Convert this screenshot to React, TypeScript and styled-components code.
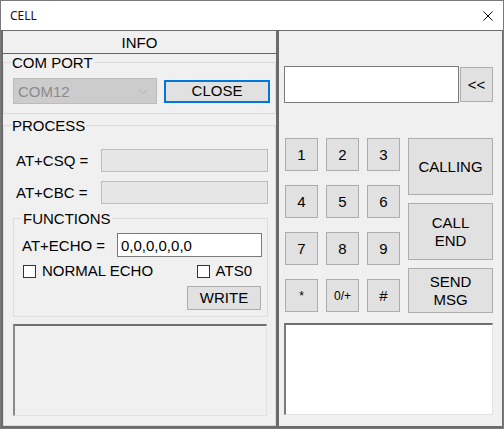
import React from 'react';
import styled, { createGlobalStyle } from 'styled-components';

const GlobalStyle = createGlobalStyle`
  html, body {
    margin: 0;
    padding: 0;
    background: #ffffff;
  }
  body {
    font-family: "Liberation Sans", Arial, sans-serif;
    font-size: 15px;
    color: #000;
  }
  * {
    box-sizing: border-box;
  }
`;

const digits = ['1', '2', '3', '4', '5', '6', '7', '8', '9', '*', '0/+', '#'];

export default function App() {
  return (
    <>
      <GlobalStyle />
      <Window>
        <TitleBar>
          <Title>CELL</Title>
          <svg width="10" height="10" viewBox="0 0 10 10">
            <path d="M0.5 0.5 L9.5 9.5 M9.5 0.5 L0.5 9.5" stroke="#111" strokeWidth="1" />
          </svg>
        </TitleBar>
        <Body>
          <LeftPanel>
            <InfoTab>INFO</InfoTab>
            <Group $pad="7px 5px 9px 9px">
              <Legend $offset={-2}>COM PORT</Legend>
              <PortRow>
                <Combo>
                  <span>COM12</span>
                  <svg width="9" height="5" viewBox="0 0 9 5">
                    <path d="M0.5 0.5 L4.5 4.5 L8.5 0.5" stroke="#b0b0b0" fill="none" strokeWidth="1" />
                  </svg>
                </Combo>
                <Button $primary $w={106} $h={23}>
                  CLOSE
                </Button>
              </PortRow>
            </Group>
            <Group $pad="15px 7px 9px 9px" $grow $top={3}>
              <Legend $offset={-2}>PROCESS</Legend>
              <FieldRow $field={167} $indent={3}>
                <span>AT+CSQ =</span>
                <ReadOnlyBox />
              </FieldRow>
              <FieldRow $field={167} $indent={3} $top={9}>
                <span>AT+CBC =</span>
                <ReadOnlyBox />
              </FieldRow>
              <Group $pad="6px 6px 6px 8px" $top={6}>
                <Legend $offset={0}>FUNCTIONS</Legend>
                <FieldRow $field={145} $right={-1}>
                  <span>AT+ECHO =</span>
                  <EditBox>0,0,0,0,0,0</EditBox>
                </FieldRow>
                <CheckRow>
                  <CheckItem>
                    <CheckBox />
                    NORMAL ECHO
                  </CheckItem>
                  <CheckItem>
                    <CheckBox />
                    ATS0
                  </CheckItem>
                </CheckRow>
                <ActionRow>
                  <Button $w={74} $h={24}>
                    WRITE
                  </Button>
                </ActionRow>
              </Group>
              <LogBox />
            </Group>
          </LeftPanel>
          <RightPanel>
            <DisplayRow>
              <Display />
              <Button $w={33} $h={35}>
                &lt;&lt;
              </Button>
            </DisplayRow>
            <KeyPad>
              <Keys>
                {digits.map((d) => (
                  <Button key={d} $w={33} $h={33} $small={d === '*' || d === '0/+'}>
                    {d}
                  </Button>
                ))}
              </Keys>
              <SideKeys>
                <Button $w={85} $h={57}>
                  CALLING
                </Button>
                <Button $w={85} $h={57}>
                  CALL
                  <br />
                  END
                </Button>
                <Button $w={85} $h={45}>
                  SEND
                  <br />
                  MSG
                </Button>
              </SideKeys>
            </KeyPad>
            <MsgArea />
          </RightPanel>
        </Body>
      </Window>
    </>
  );
}

const Window = styled.div`
  width: 504px;
  height: 429px;
  border: 1px solid #7a7a7a;
  background: #6b6b6b;
  display: flex;
  flex-direction: column;
`;

const TitleBar = styled.div`
  height: 30px;
  background: #ffffff;
  display: flex;
  align-items: center;
  justify-content: space-between;
  padding: 0 10px 0 9px;
`;

const Title = styled.span`
  font-family: "Noto Sans", "Open Sans", sans-serif;
  font-size: 12px;
  color: #1a1020;
`;

const Body = styled.div`
  flex: 1;
  display: flex;
  gap: 3px;
  padding: 1px 1px 2px 2px;
`;

const LeftPanel = styled.div`
  width: 273px;
  background: #f0f0f0;
  display: flex;
  flex-direction: column;
`;

const RightPanel = styled.div`
  width: 223px;
  background: #f0f0f0;
  display: flex;
  flex-direction: column;
  padding: 35px 9px 0 5px;
`;

const InfoTab = styled.div`
  height: 23px;
  border-bottom: 1px solid #646464;
  display: flex;
  align-items: center;
  justify-content: center;
`;

const Group = styled.fieldset<{ $pad: string; $grow?: boolean; $top?: number }>`
  margin: ${(p) => p.$top ?? 0}px 0 0 0;
  padding: ${(p) => p.$pad};
  border: 1px solid #dcdcdc;
  min-width: 0;
  display: flex;
  flex-direction: column;
  ${(p) => (p.$grow ? 'flex: 1;' : '')}
`;

const Legend = styled.legend<{ $offset: number }>`
  margin-left: ${(p) => p.$offset}px;
  padding: 0 1px;
  line-height: 17px;
`;

const PortRow = styled.div`
  height: 26px;
  display: flex;
  align-items: center;
  gap: 7px;
`;

const Combo = styled.div`
  width: 144px;
  height: 26px;
  background: #cccccc;
  border: 1px solid #bcbcbc;
  color: #8a8a8a;
  display: flex;
  align-items: center;
  justify-content: space-between;
  padding: 0 8px 0 4px;
`;

const Button = styled.div<{ $w: number; $h: number; $primary?: boolean; $small?: boolean }>`
  width: ${(p) => p.$w}px;
  height: ${(p) => p.$h}px;
  flex: none;
  background: #e1e1e1;
  border: ${(p) => (p.$primary ? '2px solid #0078d7' : '1px solid #adadad')};
  display: flex;
  align-items: center;
  justify-content: center;
  text-align: center;
  font-size: ${(p) => (p.$small ? '12px' : '15px')};
  line-height: 18px;
`;

const FieldRow = styled.div<{ $field: number; $indent?: number; $top?: number; $right?: number }>`
  display: grid;
  grid-template-columns: 1fr ${(p) => p.$field}px;
  align-items: center;
  padding-left: ${(p) => p.$indent ?? 0}px;
  margin-top: ${(p) => p.$top ?? 0}px;
  margin-right: ${(p) => p.$right ?? 0}px;
`;

const ReadOnlyBox = styled.div`
  height: 23px;
  background: #e6e6e6;
  border: 1px solid #bcbcbc;
`;

const EditBox = styled.div`
  height: 24px;
  background: #ffffff;
  border: 1px solid #7a7a7a;
  padding-left: 3px;
  display: flex;
  align-items: center;
`;

const CheckRow = styled.div`
  margin-top: 7px;
  height: 14px;
  display: flex;
  align-items: center;
  justify-content: space-between;
  padding: 0 9px 0 1px;
`;

const CheckItem = styled.label`
  display: flex;
  align-items: center;
  gap: 6px;
  line-height: 14px;
`;

const CheckBox = styled.span`
  width: 13px;
  height: 13px;
  background: #ffffff;
  border: 1px solid #333333;
`;

const ActionRow = styled.div`
  margin-top: 8px;
  display: flex;
  justify-content: flex-end;
`;

const LogBox = styled.div`
  margin-top: 7px;
  height: 92px;
  width: 254px;
  background: #f0f0f0;
  border-style: solid;
  border-width: 2px 1px 1px 2px;
  border-color: #6e6e6e #e3e3e3 #e3e3e3 #8a8a8a;
`;

const DisplayRow = styled.div`
  display: flex;
  align-items: center;
  gap: 1px;
`;

const Display = styled.div`
  width: 175px;
  height: 37px;
  background: #ffffff;
  border: 1px solid #7a7a7a;
`;

const KeyPad = styled.div`
  margin: 35px 0 0 1px;
  display: flex;
  gap: 8px;
`;

const Keys = styled.div`
  display: grid;
  grid-template-columns: repeat(3, 33px);
  grid-auto-rows: 33px;
  column-gap: 8px;
  row-gap: 14px;
`;

const SideKeys = styled.div`
  display: flex;
  flex-direction: column;
  gap: 8px;
`;

const MsgArea = styled.div`
  margin-top: 10px;
  height: 92px;
  width: 209px;
  background: #ffffff;
  border-style: solid;
  border-width: 2px 1px 1px 2px;
  border-color: #6e6e6e #e3e3e3 #e3e3e3 #7a7a7a;
`;
